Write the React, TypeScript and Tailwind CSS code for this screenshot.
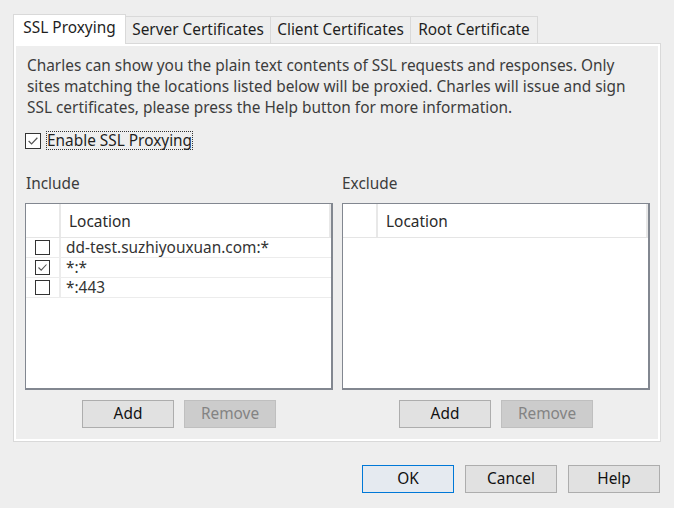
import React from "react";

const font = { fontFamily: '"Noto Sans", "Open Sans", sans-serif' };

function Check({ checked, size = 15 }: { checked: boolean; size?: number }) {
  return (
    <div
      className="border border-[#333333] bg-white flex items-center justify-center shrink-0"
      style={{ width: size, height: size }}
    >
      {checked && (
        <svg width={size - 4} height={size - 4} viewBox="0 0 11 11">
          <path d="M1.5 5.5 L4.2 8.2 L9.5 2.5" fill="none" stroke="#555" strokeWidth="1.1" />
        </svg>
      )}
    </div>
  );
}

function Btn({ label, disabled, primary }: { label: string; disabled?: boolean; primary?: boolean }) {
  const cls = disabled
    ? "bg-[#cccccc] border-[#bfbfbf] text-[#838383]"
    : primary
    ? "bg-[#e5eaf0] border-[#0078d7] text-[#111111]"
    : "bg-[#e1e1e1] border-[#adadad] text-[#111111]";
  return (
    <div className={`w-[92px] h-[28px] border flex items-center justify-center text-[15.4px] ${cls}`}>
      {label}
    </div>
  );
}

function Table({ rows }: { rows: { checked: boolean; text: string }[] }) {
  return (
    <div className="w-[308px] h-[187px] bg-white border-t border-l border-r-2 border-b-2 border-[#828790] flex flex-col">
      <div className="h-[34px] flex border-b border-[#e5e5e5] shrink-0">
        <div className="w-[35px] border-r-2 border-[#e8e8e8]" />
        <div className="flex-1 flex items-center pl-[8px] pt-[2px] text-[15.4px] text-[#2a2a2a] border-r-2 border-[#e8e8e8]">
          Location
        </div>
      </div>
      {rows.map((r, i) => (
        <div key={i} className="h-[20px] flex border-b border-[#ececec]">
          <div className="w-[35px] flex items-center justify-center border-r-2 border-[#ececec]">
            <Check checked={r.checked} size={15} />
          </div>
          <div className="flex-1 flex items-center pl-[5px] pt-[1px] text-[15.4px] text-[#333333] leading-none">
            {r.text}
          </div>
        </div>
      ))}
    </div>
  );
}

export default function App() {
  const tabs = [
    { t: "Server Certificates", w: "w-[145px]" },
    { t: "Client Certificates", w: "w-[140px]" },
    { t: "Root Certificate", w: "w-[127px]" },
  ];
  return (
    <div className="w-[674px] h-[508px] bg-[#eeeeee] overflow-hidden" style={font}>
      <div className="pt-[13px] pl-[13px] pr-[13px]">
        <div className="flex items-end h-[30px]">
          <div className="w-[113px] h-[30px] bg-white border-t border-l border-r border-[#d9d9d9] flex items-center justify-center text-[15.4px] text-[#1e1e1e] relative z-10 -mb-[1px] pb-[4px]">
            SSL Proxying
          </div>
          {tabs.map((t) => (
            <div
              key={t.t}
              className={`${t.w} h-[27px] border-t border-r border-[#d9d9d9] bg-[#eeeeee] flex items-center justify-center text-[15.4px] text-[#1e1e1e]`}
            >
              {t.t}
            </div>
          ))}
        </div>
        <div className="w-[648px] h-[399px] border border-[#d9d9d9]">
          <div className="w-full h-full border-2 border-white pl-[9px] pr-[7px] pt-[9px]">
            <div className="text-[15.4px] leading-[21px] text-[#3c3c3c] pl-[2px]">
              <div>Charles can show you the plain text contents of SSL requests and responses. Only</div>
              <div>sites matching the locations listed below will be proxied. Charles will issue and sign</div>
              <div>SSL certificates, please press the Help button for more information.</div>
            </div>
            <div className="flex items-center mt-[13px] h-[19px]">
              <Check checked size={16} />
              <div className="ml-[5px] border border-dotted border-[#333] h-[19px] flex items-center text-[15.4px] text-[#1e1e1e]">
                Enable SSL Proxying
              </div>
            </div>
            <div className="flex gap-[9px] mt-[22px]">
              <div className="flex flex-col">
                <div className="text-[15.4px] text-[#3c3c3c] h-[31px] pl-[1px]">Include</div>
                <Table
                  rows={[
                    { checked: false, text: "dd-test.suzhiyouxuan.com:*" },
                    { checked: true, text: "*:*" },
                    { checked: false, text: "*:443" },
                  ]}
                />
                <div className="flex justify-center gap-[10px] mt-[10px]">
                  <Btn label="Add" />
                  <Btn label="Remove" disabled />
                </div>
              </div>
              <div className="flex flex-col">
                <div className="text-[15.4px] text-[#3c3c3c] h-[31px]">Exclude</div>
                <Table rows={[]} />
                <div className="flex justify-center gap-[10px] mt-[10px]">
                  <Btn label="Add" />
                  <Btn label="Remove" disabled />
                </div>
              </div>
            </div>
          </div>
        </div>
        <div className="flex justify-end gap-[11px] mt-[23px] pr-[1px]">
          <Btn label="OK" primary />
          <Btn label="Cancel" />
          <Btn label="Help" />
        </div>
      </div>
    </div>
  );
}
